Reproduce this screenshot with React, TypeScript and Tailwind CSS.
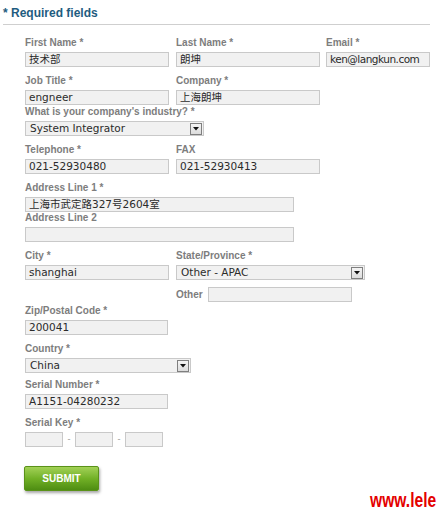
import React from 'react';

const label = "h-[12px] leading-[12px] text-[10px] font-bold text-[#7d7d7d] whitespace-nowrap";
const box = "h-[15px] border border-[#c9c9c9] bg-[#f1f1f1] pl-[3px] text-[10.5px] leading-[13px] text-[#2b2b2b] font-['DejaVu_Sans','Noto_Sans_CJK_SC',sans-serif] whitespace-nowrap overflow-hidden";

function Field({ title, value, width, extra = "" }: { title: string; value?: string; width: string; extra?: string }) {
  return (
    <div>
      <div className={label}>{title}</div>
      <div className={`${box} mt-[3px] ${width} ${extra}`}>{value}</div>
    </div>
  );
}

function Select({ value, width }: { value: string; width: string }) {
  return (
    <div className={`${box} ${width} flex items-center justify-between pr-[1px] pl-[4px]`}>
      <span>{value}</span>
      <span className="w-[12px] h-[12px] border border-[#7f7f7f] bg-gradient-to-b from-[#f4f4f4] to-[#dcdcdc] flex items-center justify-center">
        <svg width="6" height="4" viewBox="0 0 6 4" className="mt-[1px]">
          <path d="M0 0h6L3 3.5z" fill="#111" />
        </svg>
      </span>
    </div>
  );
}

export default function App() {
  return (
    <div className="w-[438px] h-[516px] overflow-hidden bg-white font-['Liberation_Sans',Arial,sans-serif]">
      <div className="pt-[5px] pl-[3px]">
        <h2 className="text-[12px] leading-[16px] font-bold text-[#1f5c80]">* Required fields</h2>
        <div className="mt-[3px] mr-[8px] h-px bg-[#cfcfcf]" />
      </div>

      <form className="pl-[25px] pt-[12px]" onSubmit={(e) => e.preventDefault()}>
        <div className="flex">
          <div className="w-[151px]"><Field title="First Name *" value="技术部" width="w-[144px]" /></div>
          <div className="w-[150px]"><Field title="Last Name *" value="朗坤" width="w-[144px]" /></div>
          <div><Field title="Email *" value="ken@langkun.com" width="w-[104px]" extra="tracking-[-0.5px]" /></div>
        </div>

        <div className="flex mt-[8px]">
          <div className="w-[151px]"><Field title="Job Title *" value="engneer" width="w-[144px]" /></div>
          <div><Field title="Company *" value="上海朗坤" width="w-[144px]" /></div>
        </div>

        <div className="mt-[1px]">
          <div className={label}>What is your company's industry? *</div>
          <div className="mt-[3px]"><Select value="System Integrator" width="w-[179px]" /></div>
        </div>

        <div className="flex mt-[8px]">
          <div className="w-[151px]"><Field title="Telephone *" value="021-52930480" width="w-[144px]" /></div>
          <div><Field title="FAX" value="021-52930413" width="w-[144px]" /></div>
        </div>

        <div className="mt-[8px]">
          <Field title="Address Line 1 *" value="上海市武定路327号2604室" width="w-[269px]" />
        </div>
        <div>
          <Field title="Address Line 2" width="w-[269px]" />
        </div>

        <div className="flex mt-[8px]">
          <div className="w-[151px]"><Field title="City *" value="shanghai" width="w-[144px]" /></div>
          <div>
            <div className={label}>State/Province *</div>
            <div className="mt-[3px]"><Select value="Other - APAC" width="w-[189px]" /></div>
            <div className="flex items-center mt-[7px]">
              <span className={`${label} w-[32px]`}>Other</span>
              <div className={`${box} w-[144px]`} />
            </div>
          </div>
        </div>

        <div className="mt-[3px]">
          <Field title="Zip/Postal Code *" value="200041" width="w-[143px]" />
        </div>

        <div className="mt-[8px]">
          <div className={label}>Country *</div>
          <div className="mt-[3px]"><Select value="China" width="w-[166px]" /></div>
        </div>

        <div className="mt-[6px]">
          <Field title="Serial Number *" value="A1151-04280232" width="w-[143px]" />
        </div>

        <div className="mt-[8px]">
          <div className={label}>Serial Key *</div>
          <div className="flex items-center mt-[3px]">
            <div className={`${box} w-[38px]`} />
            <span className="w-[12px] text-center text-[9px] text-[#999]">-</span>
            <div className={`${box} w-[38px]`} />
            <span className="w-[12px] text-center text-[9px] text-[#999]">-</span>
            <div className={`${box} w-[38px]`} />
          </div>
        </div>

        <button
          type="submit"
          className="mt-[19px] -ml-[1px] w-[75px] h-[25px] rounded-[2px] border border-[#5a9219] bg-gradient-to-b from-[#a2d155] via-[#72b126] to-[#4e8d12] text-white text-[10px] font-bold shadow-[1px_2px_3px_rgba(0,0,0,0.35)]"
        >
          SUBMIT
        </button>
      </form>

      {/* watermark */}
      <div className="pl-[370px] -mt-[1px] whitespace-nowrap">
        <span className="inline-block origin-left scale-x-[0.78] text-[20px] leading-[20px] font-bold text-[#e40000]">
          www.lele
        </span>
      </div>
    </div>
  );
}
